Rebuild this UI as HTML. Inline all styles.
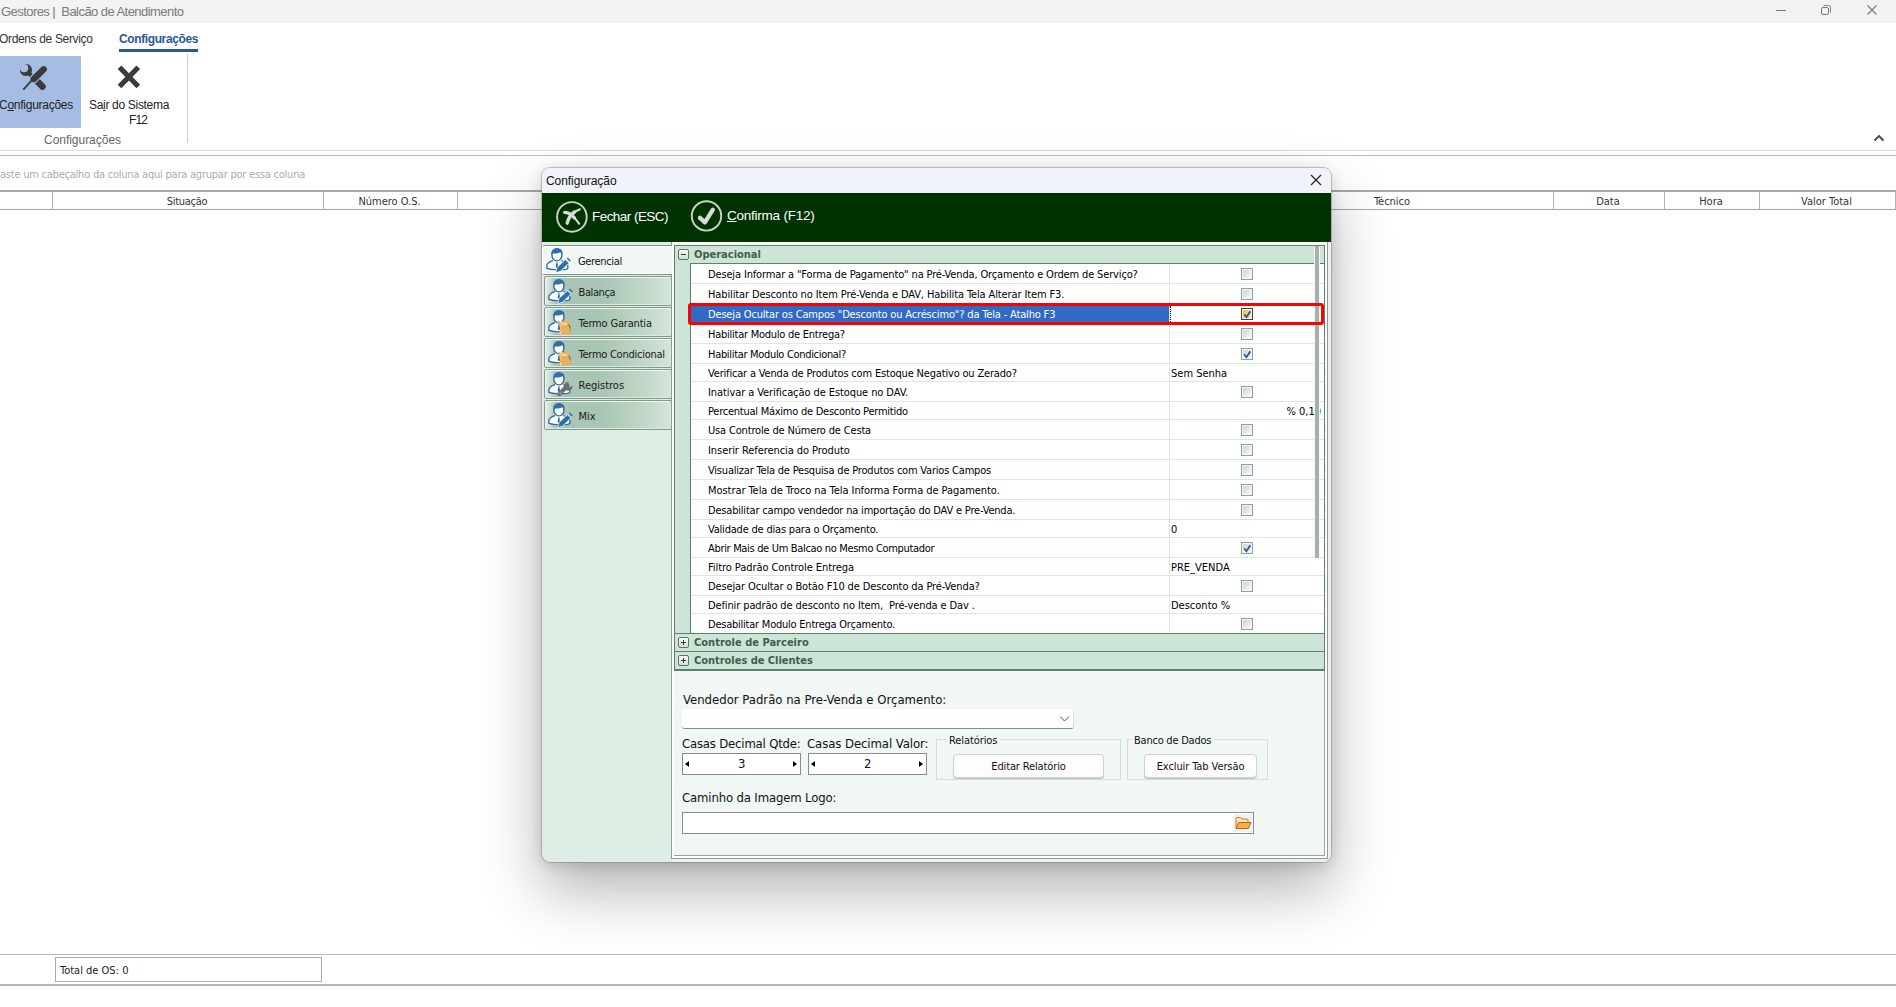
<!DOCTYPE html>
<html lang="pt-BR">
<head>
<meta charset="utf-8">
<title>Gestores | Balcão de Atendimento</title>
<style>
*{box-sizing:border-box;margin:0;padding:0}
html,body{width:1896px;height:1007px;overflow:hidden;background:#fff}
body{position:relative;font-family:"Liberation Sans",sans-serif;font-size:12px;color:#222}
.a{position:absolute;white-space:nowrap}
.ui{font-family:"Liberation Sans",sans-serif}
.th{font-family:"DejaVu Sans Condensed","DejaVu Sans","Liberation Sans",sans-serif;font-stretch:condensed}
.vd{font-family:"DejaVu Sans","Liberation Sans",sans-serif}
/* main window */
#titlebar{left:0;top:0;width:1896px;height:23px;background:#f3f3f3}
#title{left:1px;top:4px;font-size:13px;color:#7a7a7a;line-height:16px}
#tab1{left:-1px;top:31px;font-size:12px;color:#333;line-height:16px}
#tab2{left:119px;top:31px;font-size:12px;color:#2b579a;font-weight:bold;line-height:16px}
#tabline{left:119px;top:49px;width:79px;height:3px;background:#2b579a}
#btn1{left:0;top:56px;width:81px;height:72px;background:#a5bde3}
#btn1l{left:-1px;top:97px;font-size:12px;color:#222;line-height:16px}
#btn2l{left:89px;top:97px;font-size:12px;color:#222;line-height:16px}
#btn2f{left:129px;top:112px;font-size:12px;color:#222;line-height:16px}
#grpcap{left:44px;top:132px;font-size:12px;color:#666;line-height:16px}
#sep1{left:187px;top:54px;width:1px;height:89px;background:#cfcfcf}
#rib1{left:0;top:150px;width:1896px;height:1px;background:#dcdcdc}
#rib2{left:0;top:155px;width:1896px;height:1px;background:#bdbdbd}
#grptext{left:0;top:167px;font-size:11px;color:#ababab;line-height:16px}
#ghead{left:0;top:190px;width:1896px;height:20px;border-top:2px solid #a8a8a8;border-bottom:1px solid #a8a8a8;background:#fff}
.gs{top:192px;width:1px;height:17px;background:#b4b4b4}
.gh{margin-left:-1px;top:194px;font-size:11px;color:#333;line-height:16px;text-align:center}
#foot1{left:0;top:954px;width:1896px;height:1px;background:#b9b9b9}
#footbox{left:55px;top:957px;width:267px;height:25px;border:1px solid #a9a9a9;background:#fff}
#foottxt{left:60px;top:963px;font-size:11px;color:#222;line-height:16px}
#foot2{left:0;top:984px;width:1896px;height:2px;background:#b4b4b4}
/* dialog */
#dlg{left:542px;top:168px;width:789px;height:694px;border-radius:8px;background:#deeee4;box-shadow:0 0 0 1px rgba(120,120,120,.42),0 28px 60px rgba(0,0,0,.30),0 3px 14px rgba(0,0,0,.14);overflow:hidden}
#dtitle{left:0;top:0;width:789px;height:25px;background:#f0f3f9}
#dtt{left:4px;top:5px;font-size:12px;color:#111;line-height:16px}
#dtool{left:0;top:25px;width:789px;height:49px;background:#003300}
.tbt{font-size:13.5px;color:#fff;line-height:18px}
#rp{left:130px;top:74px;width:656px;height:617px;background:#fff}
/* coordinates below are page based inside #pg (offset wrapper) */
#pg{left:-542px;top:-168px;width:1896px;height:1007px}
.ltab{left:544px;width:128px;height:30px;border:1px solid #81998a;border-radius:2px;background:linear-gradient(90deg,#e3efe7 0,#cfe1d5 5px,#a9c5b3 10px,#a9c5b3 45%,#c2d9ca 80%,#d3e5d9 100%);box-shadow:inset 1px 1px 0 #eef6f1,inset -1px -1px 0 #dcebe1}
.ltab span{position:absolute;left:33.5px;top:9px;font-size:11px;color:#1a1a1a;line-height:14px}
#ltab0{z-index:2;left:542px;top:245px;width:130px;height:30px;background:#f1f8f4;border:1px solid #7d9486;border-left-color:#fff;border-right:none;border-radius:3px 0 0 3px;box-shadow:inset 0 1px 0 #fff,inset 0 -1px 0 #fff}
#ltab0 span{position:absolute;left:35px;top:9px;font-size:11px;color:#111;line-height:14px}
#panel{left:671px;top:242px;width:657px;height:617px;background:#fff;border:1px solid #8a9e92;border-top:none}
#panelin{left:674px;top:245px;width:651px;height:611px;background:#f0f7f4;border-right:1px solid #a0a0a0;border-bottom:1px solid #a0a0a0}
#gridframe{left:674px;top:245px;width:651px;height:426px;border:1px solid #5e7f6b;border-bottom-width:2px;background:#cde5d6}
#gridhead{left:675px;top:246px;width:649px;height:18px;background:#cde5d6}
#gutter{left:675px;top:264px;width:15px;height:370px;background:#cde5d6}
#gridbody{left:690px;top:263px;width:634px;height:370px;background:#fff;border-left:1px solid #5e7f6b;border-top:1px solid #5e7f6b}
.cat{font-family:"DejaVu Sans Condensed","DejaVu Sans","Liberation Sans",sans-serif;font-stretch:condensed;font-weight:bold;font-size:11px;color:#3f5f4c;line-height:14px}
.row{position:absolute;left:691px;width:633px;border-bottom:0;box-shadow:0 1px 0 #dbe7df;font-size:11px;color:#000;white-space:nowrap}
.row .lbl{position:absolute;left:17px;top:0}
.row .val{position:absolute;left:480px;top:0}
.row .val.pct{left:auto;right:3px;}
.row.sel{background:linear-gradient(90deg,#316ac5 0,#316ac5 478px,#fff 478px);color:#fff}
.cb{position:absolute;left:1241px;width:12px;height:12px;border:1px solid #8aa595;background:linear-gradient(135deg,#c9ccd6,#fff);box-shadow:inset 0 0 0 1px #f4f6f4}
.cb svg{position:absolute;left:-1px;top:-1px}
.cb.hot{border-color:#444;background:linear-gradient(135deg,#f6b73a,#fdecc0)}
#colsep{left:1169px;top:264px;width:1px;height:370px;background:#dbe7df}
#vscroll{left:1314px;top:246px;width:6px;height:312px;background:#a9b0ac;border-left:1px solid #f4faf6;border-right:1px solid #f4faf6}
#redbox{left:688px;top:303px;width:636px;height:22px;border:3px solid #ff0000;border-radius:3px}
.cath{left:675px;width:649px;height:18px;background:#cde5d6;border-bottom:1px solid #5e7f6b}
.pm{width:11px;height:11px;border:1px solid #5f7267;border-radius:2px;background:linear-gradient(#fdfefd,#cfe0d5)}
.pm:before{content:"";position:absolute;left:2px;top:4px;width:5px;height:1px;background:#2f3f35}
.pm.plus:after{content:"";position:absolute;left:4px;top:2px;width:1px;height:5px;background:#2f3f35}
.lab{font-family:"DejaVu Sans Condensed","DejaVu Sans","Liberation Sans",sans-serif;font-stretch:condensed;font-size:13px;color:#111;line-height:16px}
.inp{background:#fff;border:1px solid #8c8c8c}
.spin{background:#fff;border:1px solid #8c8c8c;height:22px}
.tri-l{width:0;height:0;border-top:3px solid transparent;border-bottom:3px solid transparent;border-right:4px solid #000}
.tri-r{width:0;height:0;border-top:3px solid transparent;border-bottom:3px solid transparent;border-left:4px solid #000}
.grp{border:1px solid #d5ddd8}
.grpt{background:#f0f7f4;padding:0 3px;font-size:11px;color:#111;line-height:14px}
.btn{border:1px solid #d0d0d0;border-radius:4px;background:#fdfdfd;font-size:11px;color:#111;text-align:center;line-height:24px;height:24px;box-shadow:0 1px 0 #c8c8c8}
#title{letter-spacing:-0.554px}
#tab1{letter-spacing:-0.347px}
#tab2{letter-spacing:-0.386px}
#btn1l{letter-spacing:-0.262px}
#btn2l{letter-spacing:-0.315px}
#btn2f{letter-spacing:-0.896px}
#grpcap{letter-spacing:-0.030px}
#grptext{letter-spacing:-0.227px}
#h1{letter-spacing:-0.258px}
#h2{letter-spacing:-0.031px}
#dtt{letter-spacing:-0.074px}
#tb1{letter-spacing:-0.544px}
#tb2{letter-spacing:-0.234px}
#lt0{letter-spacing:-0.352px}
#lt1{letter-spacing:-0.393px}
#lt2{letter-spacing:-0.179px}
#lt3{letter-spacing:-0.252px}
#c1{letter-spacing:0.013px}
#c2{letter-spacing:-0.028px}
#r0{letter-spacing:-0.148px}
#r1{letter-spacing:-0.121px}
#r2{letter-spacing:-0.166px}
#r3{letter-spacing:-0.249px}
#r4{letter-spacing:-0.316px}
#r5{letter-spacing:-0.179px}
#r6{letter-spacing:-0.087px}
#r7{letter-spacing:-0.252px}
#r8{letter-spacing:-0.166px}
#r9{letter-spacing:-0.068px}
#r10{letter-spacing:-0.201px}
#r11{letter-spacing:-0.060px}
#r12{letter-spacing:-0.192px}
#r13{letter-spacing:-0.201px}
#r14{letter-spacing:-0.324px}
#r15{letter-spacing:-0.070px}
#r16{letter-spacing:-0.122px}
#r17{letter-spacing:-0.119px}
#r18{letter-spacing:-0.231px}
#gl1{letter-spacing:-0.085px}
#gl2{letter-spacing:-0.233px}
#bt1{letter-spacing:-0.133px}
#bt2{letter-spacing:-0.095px}
#lb1{letter-spacing:-0.003px}
#lb2{letter-spacing:-0.188px}
#lb3{letter-spacing:-0.075px}
#lb4{letter-spacing:-0.147px}
</style>
</head>
<body>
<!-- main window -->
<div class="a" id="titlebar"></div>
<div class="a" id="title">Gestores |&nbsp; Balcão de Atendimento</div>
<svg class="a" style="left:1770px;top:0" width="126" height="23" viewBox="0 0 126 23"><g fill="none" stroke="#7a7a7a" stroke-width="1"><path d="M6 10.5h10"/><rect x="51.500" y="7.500" width="7" height="7" rx="1.500"/><path d="M53.500 5.500h5a2 2 0 0 1 2 2v5"/><path d="M97.500 5.500l9 9m0-9l-9 9" stroke-width="1.150"/></g></svg>
<div class="a" id="tab1">Ordens de Serviço</div>
<div class="a" id="tab2">Configurações</div>
<div class="a" id="tabline"></div>
<div class="a" id="btn1"></div>
<svg class="a" style="left:20px;top:64px" width="28" height="27" viewBox="0 0 28 27"><g fill="none" stroke="#3b3b3b"><path d="M0.050 4.950A6.060 6.060 0 1 0 4.950 0.050A4.150 4.150 0 1 1 0.050 4.950Z" fill="#3b3b3b" stroke="none"/><path d="M9 9.200L13.500 13.700" stroke-width="4.300"/><path d="M16.500 16.500L22.500 22.600" stroke-width="6.500" stroke-linecap="round"/><path d="M13.700 15.100L23.700 5.300" stroke="#a5bde3" stroke-width="8.600" stroke-linecap="round"/><path d="M13.700 15.100L23.700 5.300" stroke-width="6.400" stroke-linecap="round"/><path d="M13.500 14.400L3.300 25.700" stroke-width="1.800"/></g></svg>
<div class="a" id="btn1l">C<u>o</u>nfigurações</div>
<svg class="a" style="left:117px;top:65px" width="24" height="24" viewBox="0 0 24 24"><path d="M2.500 2.300L21.300 21.500M21.300 2.300L2.500 21.500" fill="none" stroke="#3b3b3b" stroke-width="5.200"/></svg>
<div class="a" id="btn2l">Sa<u>i</u>r do Sistema</div>
<div class="a" id="btn2f">F12</div>
<div class="a" id="grpcap">Configurações</div>
<div class="a" id="sep1"></div>
<svg class="a" style="left:1873px;top:133px" width="12" height="10" viewBox="0 0 12 10"><path d="M1.500 7.500l4.500-4.500 4.500 4.500" fill="none" stroke="#444" stroke-width="1.800"/></svg>
<div class="a" id="rib1"></div>
<div class="a" id="rib2"></div>
<div class="a th" id="grptext">aste um cabeçalho da coluna aqui para agrupar por essa coluna</div>
<div class="a" id="ghead"></div>
<div class="a gs" style="left:52px"></div>
<div class="a gs" style="left:323px"></div>
<div class="a gs" style="left:457px"></div>
<div class="a gs" style="left:1553px"></div>
<div class="a gs" style="left:1664px"></div>
<div class="a gs" style="left:1759px"></div>
<div class="a gs" style="left:1895px"></div>
<div class="a gh th" style="left:53px;width:270px"><span id="h1">Situação</span></div>
<div class="a gh th" style="left:324px;width:133px"><span id="h2">Número O.S.</span></div>
<div class="a gh th" style="left:1233px;width:320px">Técnico</div>
<div class="a gh th" style="left:1554px;width:110px">Data</div>
<div class="a gh th" style="left:1665px;width:94px">Hora</div>
<div class="a gh th" style="left:1760px;width:135px">Valor Total</div>
<div class="a" id="foot1"></div>
<div class="a" id="footbox"></div>
<div class="a th" id="foottxt">Total de OS: 0</div>
<div class="a" id="foot2"></div>

<!-- dialog -->
<div class="a" id="dlg"><div class="a" id="pg">
<div class="a" id="dtitle" style="left:542px;top:168px"></div>
<div class="a" id="dtt" style="left:546px;top:173px">Configuração</div>
<svg class="a" style="left:1310px;top:174px" width="12" height="12" viewBox="0 0 12 12"><path d="M1 1l10 10m0-10l-10 10" fill="none" stroke="#222" stroke-width="1.200"/></svg>
<div class="a" id="dtool" style="left:542px;top:193px"></div>
<svg class="a" style="left:555px;top:200px" width="34" height="34" viewBox="0 0 34 34"><circle cx="16.900" cy="16.900" r="14.800" fill="none" stroke="#c9d3c9" stroke-width="1.900"/><g fill="none" stroke="#d5ddd5" stroke-linecap="round"><path d="M9.700 12.400Q15.500 12.800 19.500 18" stroke-width="3.400"/><path d="M18.500 16.600Q21.800 20.500 24.200 23.800" stroke-width="2"/><path d="M12.200 23.200Q13.800 16 19.500 12" stroke-width="3.400"/><path d="M18.500 12.800Q21.800 10.300 25 9.200" stroke-width="2"/></g></svg>
<div class="a tbt" id="tb1" style="left:592px;top:208px">Fechar (ESC)</div>
<svg class="a" style="left:689px;top:199px" width="34" height="34" viewBox="0 0 34 34"><circle cx="17.500" cy="16.900" r="14.700" fill="none" stroke="#c9d3c9" stroke-width="1.900"/><path d="M10.900 18.900L15.900 23.300 23.900 10.700" fill="none" stroke="#d5ddd5" stroke-width="4.300" stroke-linecap="round" stroke-linejoin="round"/></svg>
<div class="a tbt" id="tb2" style="left:727px;top:207px"><u>C</u>onfirma (F12)</div>

<!-- left tabs -->
<div class="a" id="ltab0"><span class="th" id="lt0">Gerencial</span></div>
<div class="a ltab" style="top:276px"><span class="th" id="lt1">Balança</span></div>
<div class="a ltab" style="top:307px"><span class="th" id="lt2">Termo Garantia</span></div>
<div class="a ltab" style="top:338px"><span class="th" id="lt3">Termo Condicional</span></div>
<div class="a ltab" style="top:369px"><span class="th" id="lt4">Registros</span></div>
<div class="a ltab" style="top:400px"><span class="th" id="lt5">Mix</span></div>

<svg class="a" style="left:546px;top:248px;z-index:3" width="26" height="25" viewBox="0 0 26 25"><path d="M7 12.600C3.400 13.700.900 14.600.900 17.600v2.800c2.200.900 5.200 1.200 8.200 1.200h9.500c1.800-.200 2.800-.700 3.200-1.200v-2.800c0-3-3-3.900-6.600-5" fill="#fff" stroke="#2f6db0" stroke-width="1.400"/><ellipse cx="10.900" cy="6.900" rx="5" ry="6" fill="#fff" stroke="#2f6db0" stroke-width="1.400"/><path d="M5.500 7C4.600 2.300 7.600.200 11 .200c3.600 0 6.300 2 5.400 6.800-.700-1.500-1.300-2.300-2-2.800-2.300 1.300-5.700 1.600-7.500 1.200-.500.400-1 .900-1.400 1.600z" fill="#2f6db0"/><path d="M9.900 14.400h2l-.400 1.100.700 3.600-1.300 1.500-1.300-1.500.700-3.600z" fill="#2f6db0"/><path d="M10.300 23.900l1.200-4.300 7.900-7.700 3.100 3.100-7.900 7.700z" fill="#2f6db0" stroke="#e4f0e9" stroke-width="1.600" stroke-linejoin="round" paint-order="stroke"/><path d="M20.700 10.600l1.100-1.100 3 3-1.100 1.100z" fill="#2f6db0"/></svg>
<svg class="a" style="left:548px;top:279px" width="26" height="25" viewBox="0 0 26 25"><path d="M7 12.600C3.400 13.700.900 14.600.900 17.600v2.800c2.200.900 5.200 1.200 8.200 1.200h9.500c1.800-.200 2.800-.700 3.200-1.200v-2.800c0-3-3-3.900-6.600-5" fill="#fff" stroke="#2f6db0" stroke-width="1.400"/><ellipse cx="10.900" cy="6.900" rx="5" ry="6" fill="#fff" stroke="#2f6db0" stroke-width="1.400"/><path d="M5.500 7C4.600 2.300 7.600.200 11 .200c3.600 0 6.300 2 5.400 6.800-.700-1.500-1.300-2.300-2-2.800-2.300 1.300-5.700 1.600-7.500 1.200-.500.400-1 .900-1.400 1.600z" fill="#2f6db0"/><path d="M9.900 14.400h2l-.400 1.100.700 3.600-1.300 1.500-1.300-1.500.700-3.600z" fill="#2f6db0"/><path d="M10.300 23.900l1.200-4.300 7.900-7.700 3.100 3.100-7.900 7.700z" fill="#2f6db0" stroke="#e4f0e9" stroke-width="1.600" stroke-linejoin="round" paint-order="stroke"/><path d="M20.700 10.600l1.100-1.100 3 3-1.100 1.100z" fill="#2f6db0"/></svg>
<svg class="a" style="left:548px;top:310px" width="26" height="25" viewBox="0 0 26 25"><path d="M7 12.600C3.400 13.700.900 14.600.900 17.600v2.800c2.200.900 5.200 1.200 8.200 1.200h9.500c1.800-.200 2.800-.700 3.200-1.200v-2.800c0-3-3-3.900-6.600-5" fill="#fff" stroke="#2f6db0" stroke-width="1.400"/><ellipse cx="10.900" cy="6.900" rx="5" ry="6" fill="#fff" stroke="#2f6db0" stroke-width="1.400"/><path d="M5.500 7C4.600 2.300 7.600.200 11 .200c3.600 0 6.300 2 5.400 6.800-.700-1.500-1.300-2.300-2-2.800-2.300 1.300-5.700 1.600-7.500 1.200-.500.400-1 .900-1.400 1.600z" fill="#2f6db0"/><path d="M9.900 14.400h2l-.400 1.100.700 3.600-1.300 1.500-1.300-1.500.700-3.600z" fill="#2f6db0"/><path d="M10 11h13v2.600h-2.600l.300 2.400 2.800 6.500-1 1.500H10.200l-.700-2.200h2.400l.600-7.200-2.500-1z" fill="#ebb05a"/><path d="M12 11.200l2.300 2.800h4.500" fill="none" stroke="#fff" stroke-width="1"/><path d="M12.300 24l.900-2.600" fill="none" stroke="#fff" stroke-width=".800"/></svg>
<svg class="a" style="left:548px;top:341px" width="26" height="25" viewBox="0 0 26 25"><path d="M7 12.600C3.400 13.700.900 14.600.900 17.600v2.800c2.200.900 5.200 1.200 8.200 1.200h9.500c1.800-.200 2.800-.700 3.200-1.200v-2.800c0-3-3-3.900-6.600-5" fill="#fff" stroke="#2f6db0" stroke-width="1.400"/><ellipse cx="10.900" cy="6.900" rx="5" ry="6" fill="#fff" stroke="#2f6db0" stroke-width="1.400"/><path d="M5.500 7C4.600 2.300 7.600.200 11 .200c3.600 0 6.300 2 5.400 6.800-.700-1.500-1.300-2.300-2-2.800-2.300 1.300-5.700 1.600-7.500 1.200-.500.400-1 .900-1.400 1.600z" fill="#2f6db0"/><path d="M9.900 14.400h2l-.400 1.100.700 3.600-1.300 1.500-1.300-1.500.700-3.600z" fill="#2f6db0"/><path d="M10 11h13v2.600h-2.600l.300 2.400 2.800 6.500-1 1.500H10.200l-.700-2.200h2.400l.600-7.200-2.500-1z" fill="#ebb05a"/><path d="M12 11.200l2.300 2.800h4.500" fill="none" stroke="#fff" stroke-width="1"/><path d="M12.300 24l.900-2.600" fill="none" stroke="#fff" stroke-width=".800"/></svg>
<svg class="a" style="left:548px;top:372px" width="26" height="25" viewBox="0 0 26 25"><path d="M7 12.600C3.400 13.700.900 14.600.900 17.600v2.800c2.200.900 5.200 1.200 8.200 1.200h9.500c1.800-.200 2.800-.700 3.200-1.200v-2.800c0-3-3-3.900-6.600-5" fill="#fff" stroke="#2f6db0" stroke-width="1.400"/><ellipse cx="10.900" cy="6.900" rx="5" ry="6" fill="#fff" stroke="#2f6db0" stroke-width="1.400"/><path d="M5.500 7C4.600 2.300 7.600.200 11 .200c3.600 0 6.300 2 5.400 6.800-.700-1.500-1.300-2.300-2-2.800-2.300 1.300-5.700 1.600-7.500 1.200-.500.400-1 .900-1.400 1.600z" fill="#2f6db0"/><path d="M9.900 14.400h2l-.400 1.100.700 3.600-1.300 1.500-1.300-1.500.700-3.600z" fill="#2f6db0"/><path d="M11.300 22l8.200-8.200" fill="none" stroke="#6f6f6f" stroke-width="4.200" stroke-linecap="round"/><path d="M16 13.200A4.500 4.500 0 0 1 21.300 10.300l-2.300 2.600.600 2.200 2.200.600 2.500-2.400a4.500 4.500 0 0 1-2.700 5.200 4.500 4.500 0 0 1-5.600-5.300z" fill="#6f6f6f"/><circle cx="12.200" cy="21.200" r=".800" fill="#b4cdbd"/></svg>
<svg class="a" style="left:548px;top:403px" width="26" height="25" viewBox="0 0 26 25"><path d="M7 12.600C3.400 13.700.900 14.600.900 17.600v2.800c2.200.900 5.200 1.200 8.200 1.200h9.500c1.800-.200 2.800-.700 3.200-1.200v-2.800c0-3-3-3.900-6.600-5" fill="#fff" stroke="#2f6db0" stroke-width="1.400"/><ellipse cx="10.900" cy="6.900" rx="5" ry="6" fill="#fff" stroke="#2f6db0" stroke-width="1.400"/><path d="M5.500 7C4.600 2.300 7.600.200 11 .200c3.600 0 6.300 2 5.400 6.800-.700-1.500-1.300-2.300-2-2.800-2.300 1.300-5.700 1.600-7.500 1.200-.500.400-1 .900-1.400 1.600z" fill="#2f6db0"/><path d="M9.900 14.400h2l-.400 1.100.700 3.600-1.300 1.500-1.300-1.500.700-3.600z" fill="#2f6db0"/><path d="M10.300 23.900l1.200-4.300 7.900-7.700 3.100 3.100-7.900 7.700z" fill="#2f6db0" stroke="#e4f0e9" stroke-width="1.600" stroke-linejoin="round" paint-order="stroke"/><path d="M20.700 10.600l1.100-1.100 3 3-1.100 1.100z" fill="#2f6db0"/></svg>

<!-- right panel -->
<div class="a" style="left:1328px;top:242px;width:3px;height:620px;background:#efefef"></div>
<div class="a" style="left:672px;top:859px;width:659px;height:3px;background:#efefef"></div>
<div class="a" id="panel"></div>
<div class="a" id="panelin"></div>
<div class="a" id="gridframe"></div>
<div class="a" id="gridhead"></div>
<div class="a pm" style="left:678px;top:249px"></div>
<div class="a cat" id="c0" style="left:694px;top:248px">Operacional</div>
<div class="a" id="gridbody"></div>
<div class="th">
<div class="row" style="top:264px;height:19px;line-height:21px"><span class="lbl" id="r0">Deseja Informar a "Forma de Pagamento" na Pré-Venda, Orçamento e Ordem de Serviço?</span></div><div class="cb" style="top:268px"></div>
<div class="row" style="top:284px;height:19px;line-height:21px"><span class="lbl" id="r1">Habilitar Desconto no Item Pré-Venda e DAV, Habilita Tela Alterar Item F3.</span></div><div class="cb" style="top:288px"></div>
<div class="row sel" style="top:304px;height:19px;line-height:21px"><span class="lbl" id="r2">Deseja Ocultar os Campos "Desconto ou Acréscimo"? da Tela - Atalho F3</span></div><div class="cb hot" style="top:308px"><svg viewBox="0 0 12 12" width="12" height="12"><path d="M3.200 6.300L5.400 9.200 9.300 3.400" fill="none" stroke="#3a5a9a" stroke-width="1.900"/></svg></div>
<div class="row" style="top:324px;height:19px;line-height:21px"><span class="lbl" id="r3">Habilitar Modulo de Entrega?</span></div><div class="cb" style="top:328px"></div>
<div class="row" style="top:344px;height:19px;line-height:21px"><span class="lbl" id="r4">Habilitar Modulo Condicional?</span></div><div class="cb on" style="top:348px"><svg viewBox="0 0 12 12" width="12" height="12"><path d="M3.200 6.300L5.400 9.200 9.300 3.400" fill="none" stroke="#3a5a9a" stroke-width="1.900"/></svg></div>
<div class="row" style="top:364px;height:17px;line-height:19px"><span class="lbl" id="r5">Verificar a Venda de Produtos com Estoque Negativo ou Zerado?</span><span class="val">Sem Senha</span></div>
<div class="row" style="top:382px;height:19px;line-height:21px"><span class="lbl" id="r6">Inativar a Verificação de Estoque no DAV.</span></div><div class="cb" style="top:386px"></div>
<div class="row" style="top:402px;height:17px;line-height:19px"><span class="lbl" id="r7">Percentual Máximo de Desconto Permitido</span><span class="val pct">% 0,10</span></div>
<div class="row" style="top:420px;height:19px;line-height:21px"><span class="lbl" id="r8">Usa Controle de Número de Cesta</span></div><div class="cb" style="top:424px"></div>
<div class="row" style="top:440px;height:19px;line-height:21px"><span class="lbl" id="r9">Inserir Referencia do Produto</span></div><div class="cb" style="top:444px"></div>
<div class="row" style="top:460px;height:19px;line-height:21px"><span class="lbl" id="r10">Visualizar Tela de Pesquisa de Produtos com Varios Campos</span></div><div class="cb" style="top:464px"></div>
<div class="row" style="top:480px;height:19px;line-height:21px"><span class="lbl" id="r11">Mostrar Tela de Troco na Tela Informa Forma de Pagamento.</span></div><div class="cb" style="top:484px"></div>
<div class="row" style="top:500px;height:19px;line-height:21px"><span class="lbl" id="r12">Desabilitar campo vendedor na importação do DAV e Pre-Venda.</span></div><div class="cb" style="top:504px"></div>
<div class="row" style="top:520px;height:17px;line-height:19px"><span class="lbl" id="r13">Validade de dias para o Orçamento.</span><span class="val">0</span></div>
<div class="row" style="top:538px;height:19px;line-height:21px"><span class="lbl" id="r14">Abrir Mais de Um Balcao no Mesmo Computador</span></div><div class="cb on" style="top:542px"><svg viewBox="0 0 12 12" width="12" height="12"><path d="M3.200 6.300L5.400 9.200 9.300 3.400" fill="none" stroke="#3a5a9a" stroke-width="1.900"/></svg></div>
<div class="row" style="top:558px;height:17px;line-height:19px"><span class="lbl" id="r15">Filtro Padrão Controle Entrega</span><span class="val">PRE_VENDA</span></div>
<div class="row" style="top:576px;height:19px;line-height:21px"><span class="lbl" id="r16">Desejar Ocultar o Botão F10 de Desconto da Pré-Venda?</span></div><div class="cb" style="top:580px"></div>
<div class="row" style="top:596px;height:17px;line-height:19px"><span class="lbl" id="r17">Definir padrão de desconto no Item,&nbsp; Pré-venda e Dav .</span><span class="val">Desconto %</span></div>
<div class="row" style="top:614px;height:19px;line-height:21px"><span class="lbl" id="r18">Desabilitar Modulo Entrega Orçamento.</span></div><div class="cb" style="top:618px"></div>
</div>
<div class="a" id="colsep"></div>
<div class="a" id="vscroll"></div>
<div class="a cath" style="top:633px;height:19px;border-top:1px solid #5e7f6b"></div>
<div class="a pm plus" style="left:678px;top:637px"></div>
<div class="a cat" id="c1" style="left:694px;top:636px">Controle de Parceiro</div>
<div class="a cath" style="top:652px;border-bottom:none;height:17px"></div>
<div class="a pm plus" style="left:678px;top:655px"></div>
<div class="a cat" id="c2" style="left:694px;top:654px">Controles de Clientes</div>
<div class="a" style="left:1170px;top:306px;width:1px;height:16px;border-left:1px dotted #000"></div>
<div class="a" id="redbox"></div>

<!-- lower form -->
<div class="a lab" id="lb1" style="left:683px;top:692px">Vendedor Padrão na Pre-Venda e Orçamento:</div>
<div class="a" style="left:682px;top:709px;width:392px;height:20px;background:#fff;border-bottom:1px solid #8a8a8a;border-right:1px solid #e0e0e0;border-radius:0 0 3px 3px"></div>
<svg class="a" style="left:1059px;top:715px" width="11" height="8" viewBox="0 0 11 8"><path d="M1 1.500l4.500 4.500 4.500-4.500" fill="none" stroke="#555" stroke-width="1"/></svg>
<div class="a lab" id="lb2" style="left:682px;top:736px">Casas Decimal Qtde:</div>
<div class="a lab" id="lb3" style="left:807px;top:736px">Casas Decimal Valor:</div>
<div class="a spin" style="left:682px;top:753px;width:119px"></div>
<div class="a tri-l" style="left:685px;top:761px"></div>
<div class="a tri-r" style="left:793px;top:761px"></div>
<div class="a lab" style="left:738px;top:756px">3</div>
<div class="a spin" style="left:808px;top:753px;width:119px"></div>
<div class="a tri-l" style="left:811px;top:761px"></div>
<div class="a tri-r" style="left:919px;top:761px"></div>
<div class="a lab" style="left:864px;top:756px">2</div>
<div class="a grp" style="left:936px;top:739px;width:185px;height:41px"></div>
<div class="a grpt th" style="left:946px;top:734px"><span id="gl1">Relatórios</span></div>
<div class="a btn th" style="left:953px;top:754px;width:151px"><span id="bt1">Editar Relatório</span></div>
<div class="a grp" style="left:1127px;top:739px;width:141px;height:41px"></div>
<div class="a grpt th" style="left:1131px;top:734px"><span id="gl2">Banco de Dados</span></div>
<div class="a btn th" style="left:1144px;top:754px;width:113px"><span id="bt2">Excluir Tab Versão</span></div>
<div class="a lab" id="lb4" style="left:682px;top:790px">Caminho da Imagem Logo:</div>
<div class="a inp" style="left:682px;top:812px;width:572px;height:22px"></div>
<div class="a" style="left:1234px;top:814px;width:18px;height:18px;background:#f0f0f0"></div>
<svg class="a" style="left:1235px;top:816px" width="17" height="14" viewBox="0 0 17 14"><path d="M1 12V2.500q0-1 1-1h3.500l1.500 1.500h5q1 0 1 1V6" fill="#fbe7a8" stroke="#c47a2a" stroke-width="1"/><path d="M1 12.500L3.500 6.500h12.500l-2.500 6z" fill="#f3b04a" stroke="#b8651a" stroke-width="1" stroke-linejoin="round"/></svg>
</div></div>
</body>
</html>
